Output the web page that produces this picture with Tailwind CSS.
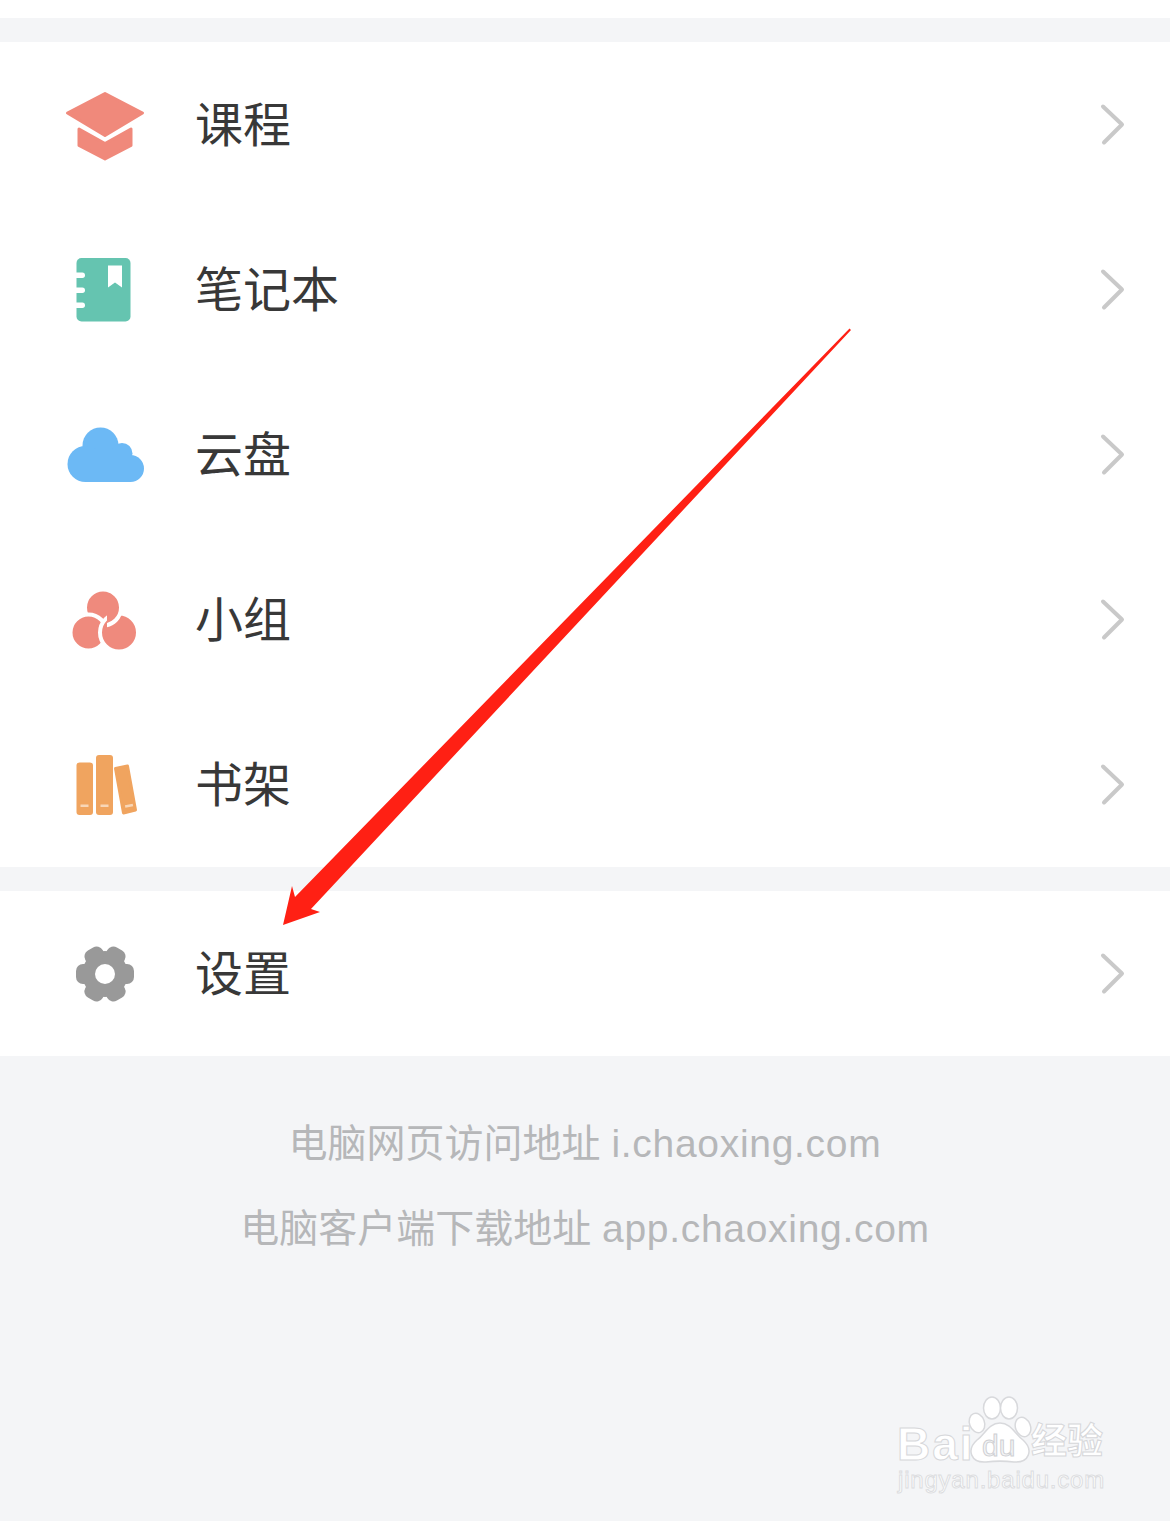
<!DOCTYPE html>
<html lang="zh-CN">
<head>
  <meta charset="UTF-8" />
  <title>我的</title>
  <script src="https://cdn.jsdelivr.net/npm/@tailwindcss/browser@4"></script>
</head>
<body class="bg-[#f4f5f7] font-['Liberation_Sans','Noto_Sans_CJK_SC',sans-serif]">
  <div class="relative h-[1521px] w-[1170px] overflow-hidden">
    <div class="h-[18px] bg-white"></div>
    <div class="h-[24px]"></div>

    <ul class="bg-white">
      <li class="flex h-[165px] items-center pl-[60px] pr-[42px]">
        <svg class="h-[90px] w-[90px]" viewBox="60 79.5 90 90">
          <path fill="#f0897b" stroke="#f0897b" stroke-width="3" stroke-linejoin="round" d="M105 93L142.500 112.500L105 135L67.500 112.500Z" />
          <path fill="#f0897b" stroke="#f0897b" stroke-width="3" stroke-linejoin="round" d="M79 128.500L105 143L131 128.500V145L105 158.500L79 145Z" />
        </svg>
        <span class="ml-[45px] flex-1 pt-[3px] text-[48px] leading-none text-[#383838]">课程</span>
        <svg class="h-[44px] w-[30px]" viewBox="0 0 30 44"><path fill="none" stroke="#c9c9c9" stroke-width="4" stroke-linecap="round" stroke-linejoin="round" d="M5 3.500L24 21.500L6 39.500" /></svg>
      </li>
      <li class="flex h-[165px] items-center pl-[60px] pr-[42px]">
        <svg class="h-[90px] w-[90px]" viewBox="60 244.500 90 90">
          <rect x="76.500" y="257.500" width="54" height="63.500" rx="5" fill="#65c4b0" />
          <g fill="#fff">
            <rect x="72" y="272" width="13" height="5.500" rx="2.700" />
            <rect x="72" y="287" width="13" height="5.500" rx="2.700" />
            <rect x="72" y="302" width="13" height="5.500" rx="2.700" />
            <path d="M108 265H122V287L115 282L108 287Z" />
          </g>
        </svg>
        <span class="ml-[45px] flex-1 pt-[3px] text-[48px] leading-none text-[#383838]">笔记本</span>
        <svg class="h-[44px] w-[30px]" viewBox="0 0 30 44"><path fill="none" stroke="#c9c9c9" stroke-width="4" stroke-linecap="round" stroke-linejoin="round" d="M5 3.500L24 21.500L6 39.500" /></svg>
      </li>
      <li class="flex h-[165px] items-center pl-[60px] pr-[42px]">
        <svg class="h-[90px] w-[90px]" viewBox="60 409.500 90 90">
          <g fill="#6cb9f5">
            <circle cx="100.500" cy="445" r="18" />
            <circle cx="85.500" cy="463.500" r="18" />
            <circle cx="122" cy="453" r="10.500" />
            <circle cx="130.500" cy="468" r="13.500" />
            <rect x="85" y="450" width="46" height="31.500" />
          </g>
        </svg>
        <span class="ml-[45px] flex-1 pt-[3px] text-[48px] leading-none text-[#383838]">云盘</span>
        <svg class="h-[44px] w-[30px]" viewBox="0 0 30 44"><path fill="none" stroke="#c9c9c9" stroke-width="4" stroke-linecap="round" stroke-linejoin="round" d="M5 3.500L24 21.500L6 39.500" /></svg>
      </li>
      <li class="flex h-[165px] items-center pl-[60px] pr-[42px]">
        <svg class="h-[90px] w-[90px]" viewBox="60 574.500 90 90">
          <defs><clipPath id="pinwheel"><rect x="107" y="585" width="30" height="46" /></clipPath></defs>
          <g fill="#ef8a7d" stroke="#fff" stroke-width="4">
            <circle cx="103" cy="607" r="18" />
            <circle cx="88.500" cy="632" r="18" />
            <circle cx="119" cy="632" r="19" />
            <circle cx="103" cy="607" r="18" clip-path="url(#pinwheel)" />
          </g>
        </svg>
        <span class="ml-[45px] flex-1 pt-[3px] text-[48px] leading-none text-[#383838]">小组</span>
        <svg class="h-[44px] w-[30px]" viewBox="0 0 30 44"><path fill="none" stroke="#c9c9c9" stroke-width="4" stroke-linecap="round" stroke-linejoin="round" d="M5 3.500L24 21.500L6 39.500" /></svg>
      </li>
      <li class="flex h-[165px] items-center pl-[60px] pr-[42px]">
        <svg class="h-[90px] w-[90px]" viewBox="60 739.500 90 90">
          <g fill="#f0a45f">
            <rect x="76.500" y="762" width="16.500" height="52.500" rx="3" />
            <rect x="96" y="754.500" width="17" height="60" rx="3" />
            <path stroke="#f0a45f" stroke-width="3" stroke-linejoin="round" d="M115.500 768L127.500 765.500L135.500 809.500L123.500 812.500Z" />
          </g>
          <g fill="#fff" opacity="0.55">
            <rect x="80.500" y="804" width="8" height="2.500" />
            <rect x="100.500" y="804" width="8" height="2.500" />
            <rect x="125" y="804" width="8" height="2.500" transform="rotate(-12 129 805)" />
          </g>
        </svg>
        <span class="ml-[45px] flex-1 pt-[3px] text-[48px] leading-none text-[#383838]">书架</span>
        <svg class="h-[44px] w-[30px]" viewBox="0 0 30 44"><path fill="none" stroke="#c9c9c9" stroke-width="4" stroke-linecap="round" stroke-linejoin="round" d="M5 3.500L24 21.500L6 39.500" /></svg>
      </li>
    </ul>

    <div class="h-[24px]"></div>

    <div class="flex h-[165px] items-center bg-white pl-[60px] pr-[42px]">
      <svg class="h-[90px] w-[90px]" viewBox="60 928.500 90 90">
        <g fill="#999">
          <circle cx="105" cy="973.500" r="23" />
          <rect x="76" y="963.500" width="58" height="20" rx="7" />
          <rect x="76" y="963.500" width="58" height="20" rx="7" transform="rotate(60 105 973.500)" />
          <rect x="76" y="963.500" width="58" height="20" rx="7" transform="rotate(120 105 973.500)" />
        </g>
        <circle cx="105" cy="973.500" r="10" fill="#fff" />
      </svg>
      <span class="ml-[45px] flex-1 pt-[3px] text-[48px] leading-none text-[#383838]">设置</span>
      <svg class="h-[44px] w-[30px]" viewBox="0 0 30 44"><path fill="none" stroke="#c9c9c9" stroke-width="4" stroke-linecap="round" stroke-linejoin="round" d="M5 3.500L24 21.500L6 39.500" /></svg>
    </div>

    <div class="pt-[45px] text-center text-[39px] leading-[85px] text-[#b6b7b9]">
      <p>电脑网页访问地址 <span class="tracking-[0.700px]">i.chaoxing.com</span></p>
      <p>电脑客户端下载地址 <span class="tracking-[0.700px]">app.chaoxing.com</span></p>
    </div>

    <!-- red arrow drawn over the screenshot -->
    <svg class="absolute left-0 top-0 h-[1521px] w-[1170px]" viewBox="0 0 1170 1521">
      <path fill="#ff2014" d="M849.500 328.500L851 330L311 909L320 912L283 925L292 886L295 897Z" />
    </svg>

    <!-- baidu watermark -->
    <div class="absolute left-[870px] top-[1380px] h-[130px] w-[260px] text-white">
      <svg class="absolute left-0 top-0 h-[130px] w-[260px]" viewBox="870 1380 260 130">
        <g fill="#fff" stroke="#d8d9dc" stroke-width="1.500">
          <ellipse cx="992" cy="1408" rx="8.500" ry="11" />
          <ellipse cx="1009" cy="1408" rx="8.500" ry="11" />
          <ellipse cx="977" cy="1423" rx="7.500" ry="10" transform="rotate(-20 977 1423)" />
          <ellipse cx="1023" cy="1427" rx="7.500" ry="10" transform="rotate(-20 1023 1427)" />
          <path d="M1000 1423C1011 1423 1015 1434 1023 1440C1034 1450 1029 1463 1014 1462C1006 1461 994 1461 986 1462C971 1463 966 1450 977 1440C985 1434 989 1423 1000 1423Z" />
        </g>
      </svg>
      <span class="absolute left-[27px] top-[41px] text-[46px] font-bold leading-none tracking-[2px] [-webkit-text-stroke:1px_#d6d7da]">Bai</span>
      <span class="absolute left-[112px] top-[51px] text-[30px] leading-none text-[#f4f5f7] [-webkit-text-stroke:1px_#cfd0d3]">du</span>
      <span class="absolute left-[161px] top-[44px] text-[36px] font-bold leading-none [-webkit-text-stroke:1px_#d6d7da]">经验</span>
      <span class="absolute left-[28px] top-[88px] text-[24px] leading-none tracking-[0.800px] [-webkit-text-stroke:1px_#dcdde0]">jingyan.baidu.com</span>
    </div>
  </div>
</body>
</html>
